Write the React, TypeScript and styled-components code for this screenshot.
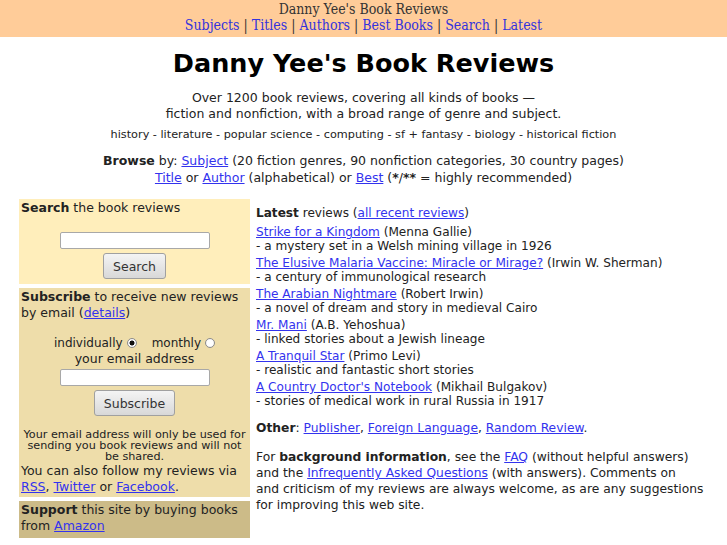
import styled, { createGlobalStyle } from "styled-components";

const GlobalStyle = createGlobalStyle`
  html { overflow: hidden; }
  body {
    margin: 0;
    background: #fff;
    color: #222;
    font-family: "DejaVu Sans", "Liberation Sans", sans-serif;
  }
  a { color: #3333ee; }
`;

const TopBar = styled.div`
  background: #ffcc99;
  text-align: center;
  padding: 1px 0 4px;
  font-family: "DejaVu Serif Condensed", "DejaVu Serif", serif;
  font-stretch: condensed;
  font-size: 14px;
  line-height: 16px;
  color: #333;
`;

const NavLink = styled.a`
  color: #3333dd;
  text-decoration: none;
`;

const Title = styled.h1`
  margin: 11px 0 0;
  text-align: center;
  font-size: 25.5px;
  line-height: 30px;
  font-weight: bold;
  color: #000;
`;

const Intro = styled.p`
  margin: 12px 0 0;
  text-align: center;
  font-size: 12.5px;
  line-height: 16px;
`;

const Topics = styled.p`
  margin: 6px 0 0;
  text-align: center;
  font-size: 11.25px;
  line-height: 14px;
`;

const Browse = styled.p`
  margin: 10px 0 0;
  text-align: center;
  font-size: 12.5px;
  line-height: 17px;
`;

const Columns = styled.div`
  display: grid;
  grid-template-columns: 231px 1fr;
  gap: 6px;
  padding: 0 19px 0 19px;
  margin-top: 13px;
  align-items: start;
`;

const Side = styled.div`
  display: flex;
  flex-direction: column;
  gap: 4px;
  font-size: 12.5px;
  line-height: 16px;
`;

const Box = styled.div<{ $bg: string; $pb: number }>`
  background: ${(p) => p.$bg};
  padding: 1px 2px ${(p) => p.$pb}px;
`;

const Center = styled.div<{ $top?: number }>`
  display: flex;
  flex-direction: column;
  align-items: center;
  text-align: center;
  margin-top: ${(p) => p.$top ?? 0}px;
`;

const TextInput = styled.input<{ $top?: number }>`
  width: 150px;
  height: 17px;
  box-sizing: border-box;
  border: 1px solid #a8a8a8;
  border-radius: 2px;
  background: #fff;
  padding: 0 3px;
  font-size: 12px;
  margin: ${(p) => p.$top ?? 0}px 0 0;
`;

const Button = styled.button`
  margin-top: 4px;
  height: 26px;
  padding: 0 9px;
  border: 1px solid #a0a0a0;
  border-radius: 3px;
  background: linear-gradient(#f4f4f4, #d8d8d8);
  font-family: "DejaVu Sans", sans-serif;
  font-size: 12.5px;
  color: #333;
`;

const RadioRow = styled.div`
  display: flex;
  align-items: center;
  justify-content: center;
  gap: 4px;
  margin-top: 14px;
  font-size: 12px;
`;

const Radio = styled.span<{ $on?: boolean }>`
  display: inline-block;
  width: 8px;
  height: 8px;
  border-radius: 50%;
  border: 1px solid #8c8c8c;
  background: radial-gradient(circle, ${(p) => (p.$on ? "#111 0 2.2px" : "#fff 0 2.2px")}, #fff 2.8px, #e4e4e4 100%);
  margin-right: ${(p) => (p.$on ? "11px" : "0")};
`;

const Privacy = styled.div`
  margin-top: 13px;
  font-size: 11.2px;
  line-height: 11px;
  text-align: center;
`;

const Follow = styled.div`
  margin-top: 1px;
`;

const Main = styled.div`
  font-size: 12.1px;
  line-height: 14px;
`;

const Heading = styled.div`
  margin-top: 7px;
  line-height: 14px;
`;

const Entry = styled.div`
  margin-top: 5px;
  & + & { margin-top: 3px; }
`;

const Para = styled.p`
  margin: 0;
  font-size: 12.3px;
  line-height: 16px;
  margin-top: 12px;
  & + & { margin-top: 13px; }
`;

const Footer = styled.p`
  margin: 14px 0 0;
  text-align: center;
  font-size: 12px;
  line-height: 16px;
`;

const reviews = [
  ["Strike for a Kingdom", "Menna Gallie", "a mystery set in a Welsh mining village in 1926"],
  ["The Elusive Malaria Vaccine: Miracle or Mirage?", "Irwin W. Sherman", "a century of immunological research"],
  ["The Arabian Nightmare", "Robert Irwin", "a novel of dream and story in medieval Cairo"],
  ["Mr. Mani", "A.B. Yehoshua", "linked stories about a Jewish lineage"],
  ["A Tranquil Star", "Primo Levi", "realistic and fantastic short stories"],
  ["A Country Doctor's Notebook", "Mikhail Bulgakov", "stories of medical work in rural Russia in 1917"],
];

const nav = ["Subjects", "Titles", "Authors", "Best Books", "Search", "Latest"];

export default function App() {
  return (
    <>
      <GlobalStyle />
      <TopBar>
        Danny Yee's Book Reviews
        <br />
        {nav.map((n, i) => (
          <span key={n}>
            {i > 0 && " | "}
            <NavLink href="#">{n}</NavLink>
          </span>
        ))}
      </TopBar>

      <Title>Danny Yee's Book Reviews</Title>
      <Intro>
        Over 1200 book reviews, covering all kinds of books —<br />
        fiction and nonfiction, with a broad range of genre and subject.
      </Intro>
      <Topics>
        history - literature - popular science - computing - sf + fantasy - biology - historical fiction
      </Topics>
      <Browse>
        <b>Browse</b> by: <a href="#">Subject</a> (20 fiction genres, 90 nonfiction categories, 30 country pages)
        <br />
        <a href="#">Title</a> or <a href="#">Author</a> (alphabetical) or <a href="#">Best</a> (<b>*</b>/<b>**</b> = highly recommended)
      </Browse>

      <Columns>
        <Side>
          <Box $bg="#ffeebb" $pb={5}>
            <b>Search</b> the book reviews
            <Center $top={16}>
              <TextInput type="text" />
              <Button>Search</Button>
            </Center>
          </Box>
          <Box $bg="#eeddaa" $pb={2}>
            <b>Subscribe</b> to receive new reviews by email (<a href="#">details</a>)
            <RadioRow>
              individually <Radio $on /> monthly <Radio />
            </RadioRow>
            <Center>
              your email address
              <TextInput type="text" $top={2} />
              <Button>Subscribe</Button>
            </Center>
            <Privacy>
              Your email address will only be used for sending you book reviews and will not be shared.
            </Privacy>
            <Follow>
              You can also follow my reviews via <a href="#">RSS</a>, <a href="#">Twitter</a> or{" "}
              <a href="#">Facebook</a>.
            </Follow>
          </Box>
          <Box $bg="#ccbb88" $pb={4}>
            <b>Support</b> this site by buying books from <a href="#">Amazon</a>
          </Box>
        </Side>

        <Main>
          <Heading>
            <b>Latest</b> reviews (<a href="#">all recent reviews</a>)
          </Heading>
          {reviews.map(([t, a, d]) => (
            <Entry key={t}>
              <a href="#">{t}</a> ({a})
              <br />- {d}
            </Entry>
          ))}
          <Para>
            <b>Other</b>: <a href="#">Publisher</a>, <a href="#">Foreign Language</a>,{" "}
            <a href="#">Random Review</a>.
          </Para>
          <Para>
            For <b>background information</b>, see the <a href="#">FAQ</a> (without helpful answers) and the{" "}
            <a href="#">Infrequently Asked Questions</a> (with answers). Comments on
            <br />
            and criticism of my reviews are always welcome, as are any suggestions for improving this web site.
          </Para>
        </Main>
      </Columns>
      <Footer>
        <a href="#">Links</a> to these reviews are welcome, but please link to the front page.
      </Footer>
    </>
  );
}
